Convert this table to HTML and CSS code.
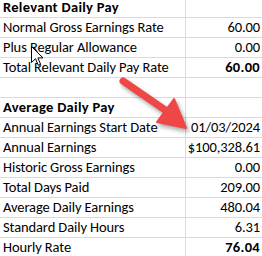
FILE: index.html
```html
<!DOCTYPE html>
<html>
<head>
<meta charset="utf-8">
<link rel="stylesheet" href="styles.css">
</head>
<body>
<div class="sheet">
  <div class="row"><div class="cell label head">Relevant Daily Pay</div><div class="cell num"></div></div>
  <div class="row"><div class="cell label">Normal Gross Earnings Rate</div><div class="cell num">60.00</div></div>
  <div class="row"><div class="cell label">Plus Regular Allowance</div><div class="cell num">0.00</div></div>
  <div class="row"><div class="cell label">Total Relevant Daily Pay Rate</div><div class="cell num bold">60.00</div></div>
  <div class="row"><div class="cell label"></div><div class="cell num"></div></div>
  <div class="row"><div class="cell label head">Average Daily Pay</div><div class="cell num"></div></div>
  <div class="row"><div class="cell label">Annual Earnings Start Date</div><div class="cell num">01/03/2024</div></div>
  <div class="row"><div class="cell label">Annual Earnings</div><div class="cell num">$100,328.61</div></div>
  <div class="row"><div class="cell label">Historic Gross Earnings</div><div class="cell num">0.00</div></div>
  <div class="row"><div class="cell label">Total Days Paid</div><div class="cell num">209.00</div></div>
  <div class="row"><div class="cell label">Average Daily Earnings</div><div class="cell num">480.04</div></div>
  <div class="row"><div class="cell label">Standard Daily Hours</div><div class="cell num">6.31</div></div>
  <div class="row"><div class="cell label">Hourly Rate</div><div class="cell num bold">76.04</div></div>
</div>
<svg class="arrow" width="262" height="256" viewBox="0 0 262 256">
  <line x1="123" y1="81" x2="168" y2="112" stroke="#ef4646" stroke-width="7" stroke-linecap="round"/>
  <polygon points="186,128 157,122 174,99" fill="#ef4646" stroke="#ef4646" stroke-width="2" stroke-linejoin="round"/>
</svg>
<svg class="cursor" width="14" height="21" viewBox="0 0 14 21">
  <path d="M0.5,0.5 L0.5,16.5 L4.5,12.7 L7.3,19.3 L9.6,18.3 L6.9,11.9 L12,11.9 Z" fill="#fff" stroke="#000" stroke-width="1" stroke-linejoin="miter"/>
</svg>
</body>
</html>
```
FILE: styles.css
```css
html, body {
  margin: 0;
  padding: 0;
  background: #fff;
  overflow: hidden;
}
body {
  width: 262px;
  height: 256px;
  position: relative;
  font-family: "Carlito", "Lato", "Liberation Sans", sans-serif;
  font-size: 14.5px;
  letter-spacing: -0.1px;
  color: #000;
}
.sheet {
  margin-top: -2px;
}
.row {
  display: grid;
  grid-template-columns: 186px 76px;
  height: 20px;
  box-sizing: border-box;
  border-bottom: 1px solid #dadada;
}
.cell {
  line-height: 19px;
  white-space: nowrap;
  overflow: hidden;
}
.label {
  border-right: 1px solid #dadada;
  padding-left: 3px;
}
.num {
  text-align: right;
  padding-right: 2px;
}
.head, .bold {
  font-weight: bold;
  letter-spacing: 0.3px;
}
.arrow {
  position: absolute;
  left: 0;
  top: 0;
  filter: drop-shadow(2px 3px 2px rgba(0,0,0,0.35));
}
.cursor {
  position: absolute;
  left: 31px;
  top: 46px;
}
```
